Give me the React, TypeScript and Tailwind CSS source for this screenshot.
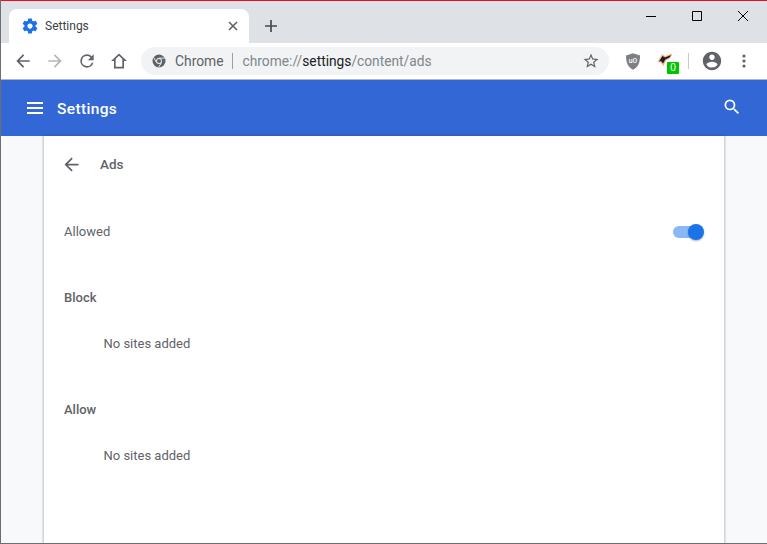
import React from "react";

const Ic = ({ children, className = "", size = 24 }: { children: React.ReactNode; className?: string; size?: number }) => (
  <svg width={size} height={size} viewBox="0 0 24 24" className={"shrink-0 " + className} fill="currentColor">
    {children}
  </svg>
);

const gear =
  "M19.43 12.98c.04-.32.07-.64.07-.98s-.03-.66-.07-.98l2.11-1.65c.19-.15.24-.42.12-.64l-2-3.46c-.12-.22-.39-.3-.61-.22l-2.49 1c-.52-.4-1.08-.73-1.69-.98l-.38-2.65C14.46 2.18 14.25 2 14 2h-4c-.25 0-.46.18-.49.42l-.38 2.65c-.61.25-1.17.59-1.69.98l-2.49-1c-.23-.09-.49 0-.61.22l-2 3.46c-.13.22-.07.49.12.64l2.11 1.65c-.04.32-.07.65-.07.98s.03.66.07.98l-2.11 1.65c-.19.15-.24.42-.12.64l2 3.46c.12.22.39.3.61.22l2.49-1c.52.4 1.08.73 1.69.98l.38 2.65c.03.24.24.42.49.42h4c.25 0 .46-.18.49-.42l.38-2.65c.61-.25 1.17-.59 1.69-.98l2.49 1c.23.09.49 0 .61-.22l2-3.46c.12-.22.07-.49-.12-.64l-2.11-1.65zM12 15.5c-1.93 0-3.5-1.57-3.5-3.5s1.57-3.5 3.5-3.5 3.5 1.57 3.5 3.5-1.57 3.5-3.5 3.5z";
const arrow = "M20 11H7.83l5.59-5.59L12 4l-8 8 8 8 1.41-1.41L7.83 13H20v-2z";

export default function App() {
  return (
    <div className="w-[767px] h-[544px] overflow-hidden flex flex-col bg-white border-l border-l-[#6e6e6e] border-b border-b-[#6e6e6e] font-['Roboto',sans-serif]">
      <div className="h-px bg-[#e81123] shrink-0" />
      {/* tab strip */}
      <div className="h-[42px] shrink-0 bg-[#dee1e6] flex items-end relative">
        <div className="ml-2 w-[240px] h-[34px] bg-white rounded-t-lg flex items-center pl-[12px] pr-[8px] relative">
          <Ic size={18} className="text-[#1a73e8]"><path d={gear} /></Ic>
          <span className="ml-[6px] text-[12px] text-[#3c4043]">Settings</span>
          <svg width="10" height="10" viewBox="0 0 10 10" className="ml-auto mr-[3px] text-[#5f6368]" stroke="currentColor" strokeWidth="1.6"><path d="M1 1l8 8M9 1l-8 8" /></svg>
        </div>
        <svg width="12" height="12" viewBox="0 0 12 12" className="ml-[16px] mb-[11px] text-[#444a50]" stroke="currentColor" strokeWidth="1.7"><path d="M6 0v12M0 6h12" /></svg>
        <div className="ml-auto flex items-start self-start h-[30px] text-black">
          <div className="w-[46px] h-[30px] flex items-center justify-center">
            <svg width="10" height="10" viewBox="0 0 10 10" stroke="currentColor" strokeWidth="1"><path d="M0 5.5h10" /></svg>
          </div>
          <div className="w-[46px] h-[30px] flex items-center justify-center">
            <svg width="10" height="10" viewBox="0 0 10 10" fill="none" stroke="currentColor" strokeWidth="1"><path d="M.5.5h9v9h-9z" /></svg>
          </div>
          <div className="w-[46px] h-[30px] flex items-center justify-center mr-px">
            <svg width="10" height="10" viewBox="0 0 10 10" stroke="currentColor" strokeWidth="1"><path d="M0 0l10 10M10 0L0 10" /></svg>
          </div>
        </div>
      </div>
      {/* toolbar */}
      <div className="h-[37px] shrink-0 bg-white border-b border-[#b5b5b5] flex items-center relative">
        <Ic size={20} className="ml-[12px] text-[#5f6368]"><path d={arrow} /></Ic>
        <Ic size={20} className="ml-[12px] text-[#b4b6b9] rotate-180"><path d={arrow} /></Ic>
        <Ic size={20} className="ml-[12px] text-[#5f6368]">
          <path d="M17.65 6.35A7.96 7.96 0 0 0 12 4a8 8 0 1 0 7.73 10h-2.08A6 6 0 1 1 12 6c1.66 0 3.14.69 4.22 1.78L13 11h7V4l-2.35 2.35z" />
        </Ic>
        <Ic size={20} className="ml-[12px] text-[#5f6368]">
          <path d="M12 3 2.5 12H6v9h12v-9h3.5L12 3zm0 2.8 4 3.7V19H8V9.5l4-3.7z" />
        </Ic>
        <div className="ml-[12px] w-[468px] h-[28px] rounded-full bg-[#f1f3f4] flex items-center text-[13.85px]">
          <svg width="14" height="14" viewBox="0 0 14 14" className="ml-[11px] shrink-0">
            <circle cx="7" cy="7" r="6.5" fill="#5f6368" />
            <circle cx="7" cy="7" r="2.900" fill="#f1f3f4" />
            <circle cx="7" cy="7" r="2" fill="#5f6368" />
            <path d="M7 4.100h5.800M4.500 8.500 1.700 3.500M9.500 8.500 6.600 13.300" stroke="#f1f3f4" strokeWidth="0.9" />
          </svg>
          <span className="ml-[9px] text-[#5f6368]">Chrome</span>
          <span className="ml-[8px] w-px h-[16px] bg-[#9aa0a6]" />
          <span className="ml-[10px] text-[13.75px] text-[#80868b]">
            chrome://<span className="text-[#202124]">settings</span>/content/ads
          </span>
          <Ic size={18} className="ml-auto mr-[9px] text-[#5f6368]">
            <path d="M22 9.24l-7.19-.62L12 2 9.19 8.63 2 9.24l5.46 4.73L5.82 21 12 17.27 18.18 21l-1.63-7.03L22 9.24zM12 15.4l-3.76 2.27 1-4.28-3.32-2.88 4.38-.38L12 6.1l1.71 4.04 4.38.38-3.32 2.88 1 4.28L12 15.4z" />
          </Ic>
        </div>
        <svg width="16" height="17" viewBox="0 0 16 17" className="ml-[16px] shrink-0">
          <path d="M8 .3l7 2.200c0 6-1 11-7 14.200C2 13.500 1 8.500 1 2.500z" fill="#7d8084" />
          <text x="8" y="10.300" fontSize="6.800" fill="#fff" textAnchor="middle" fontFamily="Roboto" fontWeight="500">uO</text>
        </svg>
        <div className="relative w-[20px] h-[20px] ml-[16px] shrink-0">
          <svg width="16" height="14" viewBox="0 0 16 14" className="absolute left-[0px] top-[2px]">
            <path d="M.5 9 L5 1 L8 3 L15.500 .5 L13.500 5 L9 7.500 L6.500 13 L3.500 9.500z" fill="#f0b98e" />
            <path d="M2 8.500 L5.500 3 L8 4.500 L14 2 L12.500 4.500 L8.300 6.500 L6 10.500 L4 8z" fill="#1d1d1d" />
          </svg>
          <div className="absolute left-[10px] top-[11px] w-[12px] h-[12px] bg-[#00c400] rounded-[1px] text-white text-[10px] leading-[12px] text-center font-['Liberation_Sans',sans-serif]">0</div>
        </div>
        <span className="ml-[11px] w-px h-[16px] bg-[#c8cacc]" />
        <Ic size={22} className="ml-[12px] text-[#5f6368]">
          <path d="M12 2C6.480 2 2 6.480 2 12s4.480 10 10 10 10-4.480 10-10S17.520 2 12 2zm0 3c1.660 0 3 1.340 3 3s-1.340 3-3 3-3-1.340-3-3 1.340-3 3-3zm0 14.200a7.200 7.200 0 0 1-6-3.220c.030-1.990 4-3.080 6-3.080s5.970 1.090 6 3.080a7.200 7.200 0 0 1-6 3.220z" />
        </Ic>
        <svg width="4" height="14" viewBox="0 0 4 14" className="ml-[19px] text-[#5f6368]" fill="currentColor">
          <circle cx="2" cy="2" r="1.600" /><circle cx="2" cy="7" r="1.600" /><circle cx="2" cy="12" r="1.600" />
        </svg>
      </div>
      {/* blue header */}
      <div className="h-[56px] shrink-0 bg-[#3367d6] flex items-center text-white">
        <svg width="16" height="12" viewBox="0 0 16 12" className="ml-[26px]" fill="currentColor">
          <path d="M0 0h16v2H0zM0 5h16v2H0zM0 10h16v2H0z" />
        </svg>
        <span className="ml-[14px] mt-[3px] text-[15.500px] font-medium tracking-[0.35px]">Settings</span>
        <Ic size={20} className="ml-auto mr-[25px] mb-[2px]">
          <path d="M15.500 14h-.790l-.280-.270A6.470 6.470 0 0 0 16 9.500 6.500 6.500 0 1 0 9.500 16c1.610 0 3.090-.590 4.230-1.570l.270.280v.790l5 4.990L20.490 19l-4.990-5zm-6 0C7.010 14 5 11.990 5 9.500S7.010 5 9.500 5 14 7.010 14 9.500 11.990 14 9.500 14z" />
        </Ic>
      </div>
      {/* content */}
      <div className="flex-1 min-h-0 bg-[#f8f9fa] flex justify-center pr-[1px]">
        <div className="w-[680px] ml-[1px] bg-white shadow-[0_0_2px_1px_rgba(60,64,67,0.3)] flex flex-col text-[13px] text-[#5f6368]">
          <div className="h-[56px] flex items-center shrink-0">
            <Ic size={21} className="ml-[17px] text-[#5f6368]"><path d={arrow} /></Ic>
            <span className="ml-[18px] font-medium text-[13.500px]">Ads</span>
          </div>
          <div className="mt-[28px] h-[24px] flex items-center pl-[20px] pr-[20px] shrink-0">
            <span>Allowed</span>
            <div className="ml-auto relative w-[32px] h-[16px] flex items-center">
              <div className="ml-px w-[29px] h-[12px] rounded-full bg-[#8ab7f5]" />
              <div className="absolute right-0 w-[16px] h-[16px] rounded-full bg-[#1a73e8] shadow-[0_1px_2px_rgba(0,0,0,0.3)]" />
            </div>
          </div>
          <div className="mt-[42px] pl-[20px] font-medium shrink-0 leading-[24px]">Block</div>
          <div className="mt-[22px] pl-[59.500px] shrink-0 leading-[24px]">No sites added</div>
          <div className="mt-[42px] pl-[20px] font-medium shrink-0 leading-[24px]">Allow</div>
          <div className="mt-[22px] pl-[59.500px] shrink-0 leading-[24px]">No sites added</div>
        </div>
      </div>
    </div>
  );
}
